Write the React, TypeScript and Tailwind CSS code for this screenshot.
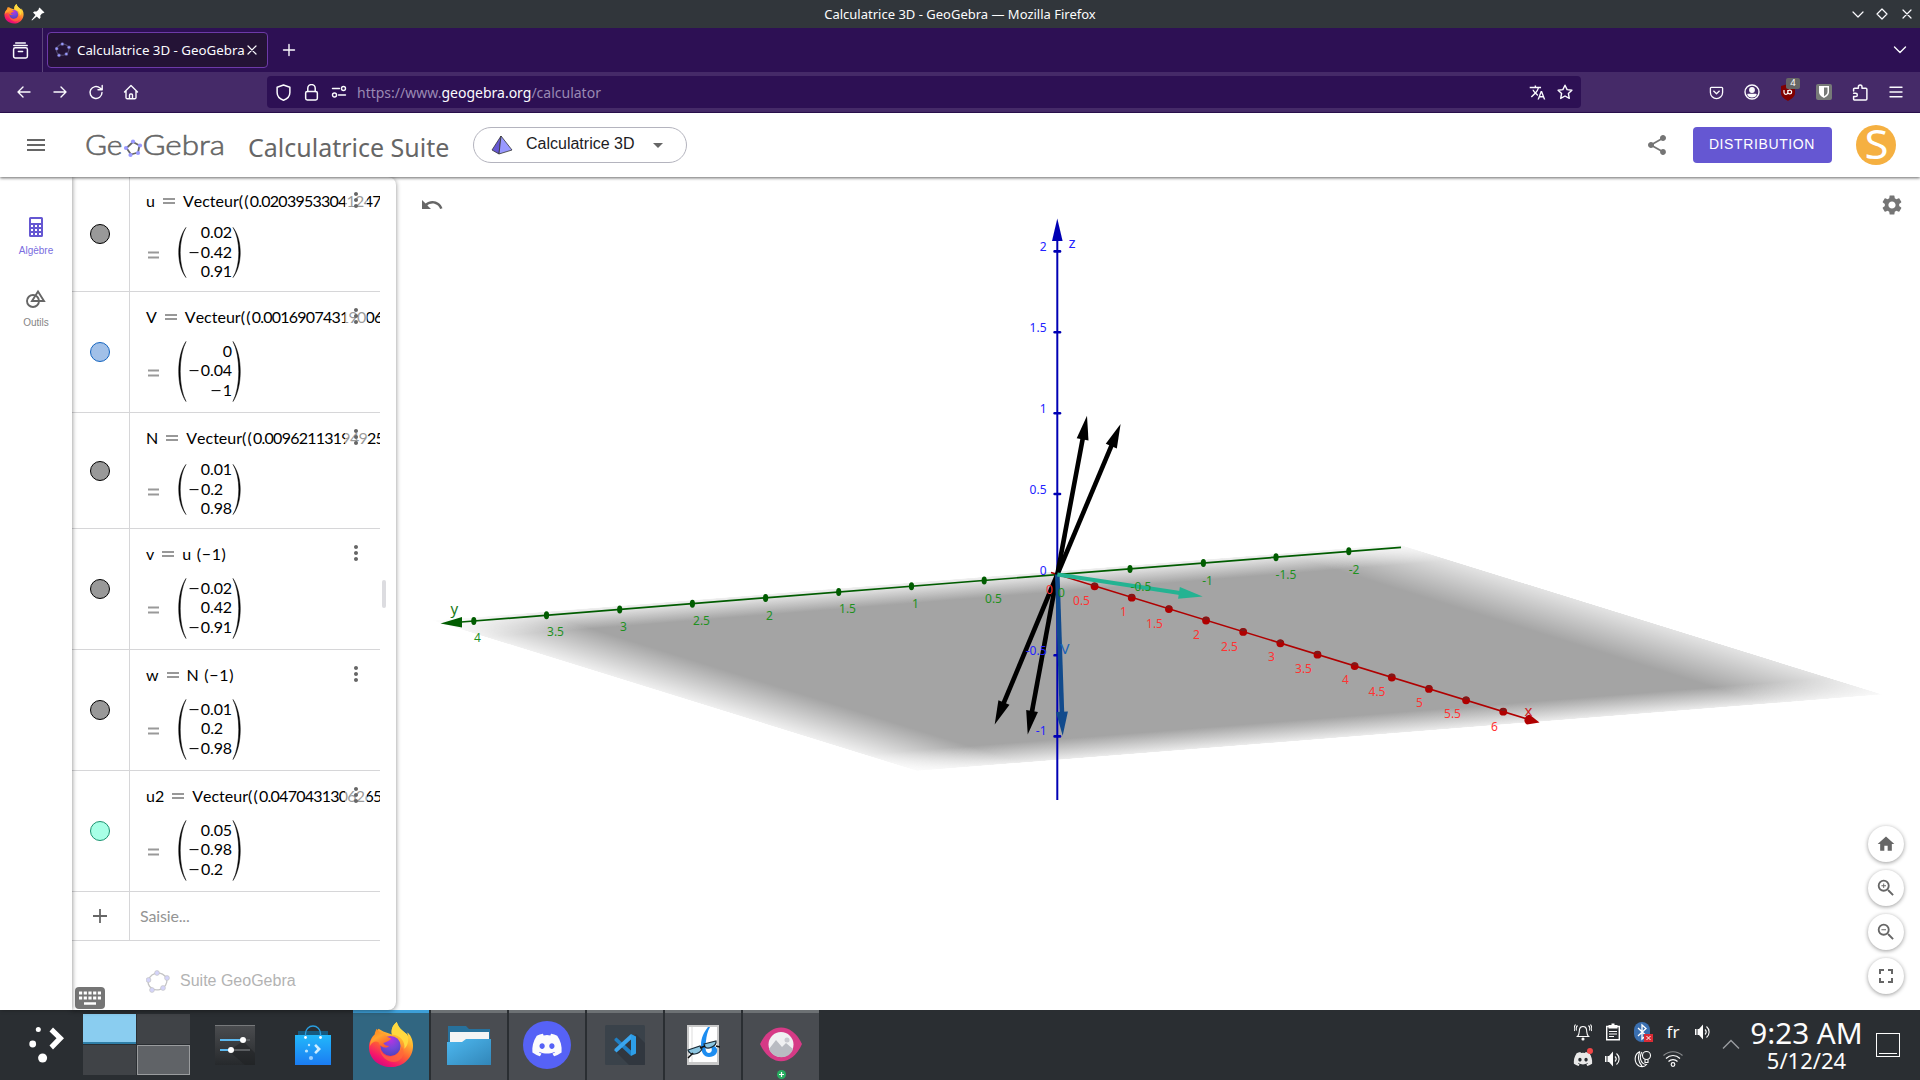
import React from "react";
import { MdShare, MdSettings, MdHome, MdFullscreen, MdArrowDropDown, MdMoreVert, MdZoomIn, MdZoomOut, MdUndo, MdTranslate, MdMenu } from "react-icons/md";
import { FaDiscord } from "react-icons/fa";

const SANS = "font-['Noto_Sans',sans-serif]";
const ARIAL = "font-['Liberation_Sans',Arial,sans-serif]";
const MATH = "font-['Lato',sans-serif]";

function Firefox({ size }: { size: number }) {
  return (
    <svg width={size} height={size} viewBox="0 0 48 48" className="shrink-0">
      <defs>
        <linearGradient id="ffBody" x1="0.8" y1="0.05" x2="0.3" y2="1">
          <stop offset="0" stopColor="#fff14f" />
          <stop offset="0.3" stopColor="#ffb82e" />
          <stop offset="0.6" stopColor="#ff5d36" />
          <stop offset="0.85" stopColor="#f5156c" />
          <stop offset="1" stopColor="#d10a80" />
        </linearGradient>
        <radialGradient id="ffGlobe" cx="0.5" cy="0.2" r="0.9">
          <stop offset="0" stopColor="#b833e1" />
          <stop offset="0.5" stopColor="#7048d8" />
          <stop offset="1" stopColor="#4a3fb5" />
        </radialGradient>
        <linearGradient id="ffFox" x1="0" y1="0" x2="0.6" y2="1">
          <stop offset="0" stopColor="#ff7a1a" />
          <stop offset="0.5" stopColor="#ffa32e" />
          <stop offset="1" stopColor="#ff5a30" />
        </linearGradient>
      </defs>
      <path d="M30 0c-5 4-6 9-5 13l-9-3-5-3c-1 1-2 3-2 5C4 14 1 21 1 26c0 12 10 21 23 21s23-10 23-22c0-7-3-12-6-14 0 1 1 3 1 4C39 10 32 8 30 0z" fill="url(#ffBody)" />
      <path d="M30 0c-5 4-6 9-5 13 9 1 14 7 13 15 4-4 5-10 3-15C38 10 32 8 30 0z" fill="#ffd93f" />
      <circle cx="23.500" cy="25" r="10.500" fill="url(#ffGlobe)" />
      <path d="M9 7c-1 2-2 4-2 6-3 3-5 7-5 12 3-5 6-5 9-4 2 6 8 7 11 4-3 0-5-1-6-3 3-1 7-2 8-5-3-1-5-1-7-5-3 0-5-1-8-5z" fill="url(#ffFox)" />
      <path d="M12 26c1 8 9 12 16 9 5-2 7-6 7-10 4 6 2 13-4 16-8 3-18-3-19-15z" fill="#ff6a3a" opacity="0.700" />
    </svg>
  );
}

function Pentagon({ size, line, dot, width }: { size: number; line: string; dot: string; width: number }) {
  const pts = [[11, 3], [21, 8], [17, 18], [6, 20], [2.5, 10]];
  return (
    <svg width={size} height={size} viewBox="0 0 24 24">
      <ellipse cx="11.500" cy="11.500" rx="9.500" ry="8.300" fill="none" stroke={line} strokeWidth={width} transform="rotate(-15 11.5 11.5)" />
      {pts.map(([x, y]) => <circle key={x} cx={x} cy={y} r="2.400" fill={dot} stroke={line} strokeWidth="0.700" />)}
    </svg>
  );
}

const stroke = { fill: "none", stroke: "#fbfbfe", strokeWidth: 1.4, strokeLinecap: "round" as const, strokeLinejoin: "round" as const };
function Ic({ children, size = 16, box = "w-9", vb = 16 }: { children: React.ReactNode; size?: number; box?: string; vb?: number }) {
  return (
    <div className={`flex shrink-0 items-center justify-center ${box}`}>
      <svg width={size} height={size} viewBox={`0 0 ${vb} ${vb}`} {...stroke}>{children}</svg>
    </div>
  );
}

function TitleBar() {
  return (
    <div className={`flex h-7 items-center bg-[#31363b] text-[13px] text-[#fcfcfc] ${SANS}`}>
      <div className="flex w-[100px] items-center gap-[7px] pl-1">
        <Firefox size={20} />
        <svg width="14" height="14" viewBox="0 0 14 14"><path d="M8.500 0.500l5 5-1.500.8-1 .2-1.700 2 .2 2.200-1.200 1.200L5.800 9.400 1 13.500.5 13l4-4.900L2 5.600l1.300-1.200 2.200.2 2-1.800.2-1z" fill="#fff" /></svg>
      </div>
      <div className="flex-1 pt-[2px] text-center">Calculatrice 3D - GeoGebra — Mozilla Firefox</div>
      <div className="flex w-[100px] justify-end">
        <Ic size={12} vb={12} box="w-6"><path d="M1 4l5 5 5-5" strokeWidth="1.200" /></Ic>
        <Ic size={12} vb={12} box="w-6"><path d="M6 1l5 5-5 5-5-5z" strokeWidth="1.200" /></Ic>
        <Ic size={12} vb={12} box="w-[26px]"><path d="M2 2l8 8M10 2l-8 8" strokeWidth="1.200" /></Ic>
      </div>
    </div>
  );
}

function TabBar() {
  return (
    <div className={`flex h-11 items-center bg-[#2d1054] text-[#fbfbfe] ${SANS}`}>
      <Ic size={17} box="w-10"><rect x="1.500" y="5.500" width="13" height="9.500" rx="1.500" /><path d="M1.700 3.300h12.600M3.500 1h9M6 9h4" /></Ic>
      <div className="ml-[2px] h-full w-px bg-[#5b4478]" />
      <div className="ml-1 flex h-9 w-[221px] items-center rounded border border-[#6d3aa8] bg-[#241336] pl-[7px]">
        <Pentagon size={16} line="#4b4468" dot="#9999ff" width={1.8} />
        <span className="ml-[6px] w-[168px] pt-[2px] text-[13.300px] whitespace-nowrap">Calculatrice 3D - GeoGebra</span>
        <Ic size={12} vb={12} box="w-3.5"><path d="M2 2l8 8M10 2l-8 8" strokeWidth="1.200" /></Ic>
      </div>
      <Ic size={16} box="ml-[3px] w-9"><path d="M8 2.500v11M2.500 8h11" /></Ic>
      <div className="flex-1" />
      <Ic size={14} vb={14} box="w-10"><path d="M1.500 4l5.500 5.500L12.500 4" /></Ic>
    </div>
  );
}

function NavBar() {
  return (
    <div className={`flex h-[41px] items-center border-b border-[#2d1054] bg-[#452a68] pl-1.5 ${SANS}`}>
      <Ic><path d="M14 8H2M7 3L2 8l5 5" /></Ic>
      <Ic><path d="M2 8h12M9 3l5 5-5 5" /></Ic>
      <Ic><path d="M14 8.500A6 6 0 1 1 12 4l1.800 1.600M14.200 1.500v4.300H10" /></Ic>
      <Ic box="-ml-px w-9"><path d="M1.500 8L8 1.500 14.500 8M3 7v6.500a1.200 1.200 0 0 0 1.200 1.200h7.600A1.200 1.200 0 0 0 13 13.500V7M6.500 14.500V11a1 1 0 0 1 1-1h1a1 1 0 0 1 1 1v3.500" /></Ic>
      <div className="ml-[118px] flex h-8 w-[1314px] items-center rounded bg-[#2d1054] pl-[2px]">
        <Ic size={17} box="w-7"><path d="M8 1l6 2v5c0 3.500-2.500 6-6 7.300C4.500 14 2 11.500 2 8V3z" /></Ic>
        <Ic size={17} box="w-7"><rect x="2.500" y="7" width="11" height="8" rx="1.500" /><path d="M4.500 7V4a3.500 3.500 0 0 1 7 0v3" /></Ic>
        <Ic box="w-7"><circle cx="12.500" cy="4.500" r="2" /><circle cx="3.500" cy="11" r="2" /><path d="M1.500 4.500h7M7.500 11h7" /></Ic>
        <span className="ml-1 text-[14px] text-[#9a89b3]">https://www.<span className="text-[#fbfbfe]">geogebra.org</span>/calculator</span>
        <div className="flex-1" />
        <div className="flex w-7 justify-center"><MdTranslate size={17} color="#fbfbfe" /></div>
        <Ic size={16} box="w-7"><path d="M8 1.200l2.100 4.400 4.800.6-3.500 3.300.9 4.900L8 12l-4.300 2.400.9-4.900L1.100 6.200l4.800-.6z" /></Ic>
        <div className="w-[2px]" />
      </div>
      <div className="flex-1" />
      <Ic size={15} box="w-9"><path d="M2.500 2.500h11a1 1 0 0 1 1 1V8a6.500 6.500 0 0 1-13 0V3.500a1 1 0 0 1 1-1zM5 6.500l3 2.800 3-2.800" /></Ic>
      <Ic size={16} box="w-9"><circle cx="8" cy="8" r="7" /><circle cx="8" cy="6" r="2.200" fill="#fbfbfe" /><path d="M4 10.500h8c-1 3-7 3-8 0z" fill="#fbfbfe" /></Ic>
      <div className="relative flex w-9 justify-center">
        <svg width="16" height="17" viewBox="0 0 16 17"><path d="M1 2l7-2 7 2v7c0 4-4 6-7 8-3-2-7-4-7-8z" fill="#800000" /><path d="M4 6v2.500a1.700 1.700 0 0 0 3.800 0V6M7.800 8a1.900 1.900 0 1 0 3.800 0 1.900 1.900 0 1 0-3.800 0" fill="none" stroke="#fff" strokeWidth="1.200" /></svg>
        <span className="absolute -top-[6px] left-[16px] flex h-[11px] w-[14px] items-center justify-center rounded-[2px] bg-[#666] text-[9.500px] text-white">4</span>
      </div>
      <div className="flex w-9 justify-center"><svg width="16" height="16" viewBox="0 0 16 16"><rect width="16" height="16" rx="2" fill="#777a78" /><path d="M3 2h10v6c0 3-3 5-5 6-2-1-5-3-5-6z" fill="#fff" /><path d="M8 3.500h3.500V8c0 2-2 3.500-3.500 4.300z" fill="#777a78" /></svg></div>
      <Ic size={17} box="w-9"><path d="M1.500 6.500V5a1 1 0 0 1 1-1H6V2.700a1.700 1.700 0 0 1 3.400 0V4H13a1 1 0 0 1 1 1v9a1 1 0 0 1-1 1H2.500a1 1 0 0 1-1-1v-2.200h2a1.500 1.500 0 0 0 0-3h-2" /></Ic>
      <Ic size={14} vb={14} box="w-9"><path d="M1 2.200h12M1 7h12M1 11.800h12" /></Ic>
      <div className="w-1.5" />
    </div>
  );
}

function AppHeader() {
  return (
    <header className="relative z-20 flex h-16 items-center bg-white shadow-[0_1px_3px_rgba(0,0,0,0.6)]">
      <MdMenu size={24} color="#666" className="ml-6" />
      <svg width="150" height="40" viewBox="0 0 150 40" className="ml-[35px]">
        <g fill="#666" fontFamily="Lato, sans-serif" fontSize="28" fontWeight="300" stroke="#666" strokeWidth="0.600">
          <text x="2" y="29.500" textLength="37.500" lengthAdjust="spacingAndGlyphs">Ge</text>
          <text x="59.500" y="29.500" textLength="82.500" lengthAdjust="spacingAndGlyphs">Gebra</text>
        </g>
        <path d="M50 17l6.500 3.500-1.500 7-7 2-4.500-6.500z" fill="none" stroke="#666" strokeWidth="1.800" strokeLinejoin="round" />
        {[[50, 16.5], [57, 20.5], [55, 28], [47.5, 30], [43, 23]].map(([x, y]) => <circle key={x} cx={x} cy={y} r="2.100" fill="#9999ff" />)}
      </svg>
      <div className={`ml-[15px] w-[204px] pt-1 text-[25px] leading-8 whitespace-nowrap text-[#666] ${SANS}`}>Calculatrice Suite</div>
      <button className={`ml-[21px] flex h-9 w-[214px] items-center rounded-full border border-[#b4b4be] text-[16px] text-[#1c1c1f] ${ARIAL}`}>
        <svg width="22" height="20" viewBox="0 0 22 20" className="ml-[17px]"><path d="M10 1L1 15l7 4z" fill="#6557d2" stroke="#333" strokeWidth="0.800" /><path d="M10 1l11 14-13 4z" fill="#9999ff" stroke="#333" strokeWidth="0.800" /></svg>
        <span className="ml-[13px] pb-[2px]">Calculatrice 3D</span>
        <MdArrowDropDown size={24} color="#666" className="ml-3" />
      </button>
      <div className="flex-1" />
      <MdShare size={24} color="#757575" />
      <button className={`ml-6 flex h-9 w-[139px] items-center justify-center rounded bg-[#6557d2] pr-px pb-[2px] text-[14px] tracking-[0.620px] text-white ${ARIAL}`}>DISTRIBUTION</button>
      <svg width="40" height="40" viewBox="0 0 40 40" className="mr-6 ml-6"><circle cx="20" cy="20" r="20" fill="#f5b041" /><text x="8.500" y="33.800" fontFamily="'Noto Sans', sans-serif" fontSize="40" textLength="24" lengthAdjust="spacingAndGlyphs" fill="#fff">S</text></svg>
    </header>
  );
}

type Item = { name: string; def: string; wide: boolean; fill: string; border: string; rows: string[]; tall: boolean };
const items: Item[] = [
  { name: "u", def: "0.020395330412472", wide: true, fill: "bg-[#999]", border: "border-black", rows: ["0.02", "−0.42", "0.91"], tall: false },
  { name: "V", def: "0.001690743190063", wide: true, fill: "bg-[#a1c0e8]", border: "border-[#1565c0]", rows: ["0", "−0.04", "−1"], tall: true },
  { name: "N", def: "0.009621131949253", wide: true, fill: "bg-[#999]", border: "border-black", rows: ["0.01", "−0.2", "0.98"], tall: false },
  { name: "v", def: "u (−1)", wide: false, fill: "bg-[#999]", border: "border-black", rows: ["−0.02", "0.42", "−0.91"], tall: true },
  { name: "w", def: "N (−1)", wide: false, fill: "bg-[#999]", border: "border-black", rows: ["−0.01", "0.2", "−0.98"], tall: true },
  { name: "u2", def: "0.04704313062653", wide: true, fill: "bg-[#a8ffe6]", border: "border-[#1b9370]", rows: ["0.05", "−0.98", "−0.2"], tall: true },
];

function Paren({ h, flip }: { h: number; flip?: boolean }) {
  return (
    <svg width="10" height={h} viewBox="0 0 10 60" preserveAspectRatio="none" className={flip ? "-scale-x-100" : ""}>
      <path d="M9 0.500C-0.700 15-0.700 45 9 59.500C1.300 45 1.300 15 9 0.500z" fill="#000" stroke="#000" strokeWidth="0.500" />
    </svg>
  );
}

function Num({ value }: { value: string }) {
  const neg = value.startsWith("−");
  return (
    <span className={`flex h-[19.500px] leading-[19.500px] ${value.endsWith("0.2") ? "pr-[9px]" : ""}`}>
      {neg && <span className="mr-[2px] w-[11px] origin-left scale-x-[1.300]">−</span>}
      <span className="tracking-[-0.100px]">{neg ? value.slice(1) : value}</span>
    </span>
  );
}

function AlgebraRow({ it }: { it: Item }) {
  return (
    <div className={`flex w-[308px] border-b border-[#d6d6d8] ${it.tall ? "h-[121px]" : "h-[116px]"}`}>
      <div className="flex w-[58px] items-center justify-center border-r border-[#d6d6d8] pr-px">
        <div className={`size-5 rounded-full border-[1.500px] ${it.fill} ${it.border}`} />
      </div>
      <div className={`relative flex-1 overflow-hidden pl-4 text-[16px] text-black ${MATH}`}>
        <div className="flex h-[50px] items-center whitespace-nowrap">
          <span>{it.name}</span>
          <svg width="12" height="6" viewBox="0 0 12 6" className="mx-[8px] shrink-0"><path d="M0 1h12M0 5h12" stroke="#777" strokeWidth="1.300" /></svg>
          {it.wide
            ? <span><span className="[font-kerning:none]">Vecteur</span><span className="tracking-[1.200px]">((</span><span className="tracking-[-0.750px]">{it.def}</span></span>
            : <span className="tracking-[0.700px]">{it.def}</span>}
        </div>
        <div className="absolute top-[10px] right-[13px] flex h-7 w-[22px] items-center justify-center bg-white/60"><MdMoreVert size={24} color="#666" className="shrink-0" /></div>
        <div className={`flex items-center ${it.tall ? "h-[58px]" : "h-[53px]"}`}>
          <svg width="11" height="8" viewBox="0 0 11 8" className="mt-[4px] ml-[2px]"><path d="M0 1.500h11M0 6.500h11" stroke="#999" strokeWidth="2.200" /></svg>
          <div className="ml-[18px] flex items-center">
            <Paren h={it.tall ? 61 : 51} />
            <div className="flex w-[45px] flex-col items-end pb-[2px]">
              {it.rows.map((r, i) => <Num key={i} value={r} />)}
            </div>
            <Paren h={it.tall ? 61 : 51} flip />
          </div>
        </div>
      </div>
    </div>
  );
}

function AlgebraView() {
  return (
    <section className="relative z-[5] flex w-[324px] rounded-r-lg bg-white shadow-[0_1px_5px_rgba(0,0,0,0.45)]">
      <div className="h-[833px] w-[308px] overflow-hidden">
        <div className="-mt-px">
          {items.map((it) => <AlgebraRow key={it.name} it={it} />)}
          <div className="flex h-[49px] border-b border-[#d6d6d8]">
            <div className="flex w-[58px] items-center justify-center border-r border-[#d6d6d8] pr-px">
              <svg width="14" height="14" viewBox="0 0 14 14"><path d="M7 0v14M0 7h14" stroke="#666" strokeWidth="1.800" /></svg>
            </div>
            <div className={`flex items-center pb-px pl-2.5 text-[16px] tracking-[-0.150px] text-[#949494] ${MATH}`}>Saisie...</div>
          </div>
          <div className={`mt-[27px] flex h-7 items-center pl-[74px] text-[16px] text-[#b3b3b3] ${ARIAL}`}>
            <Pentagon size={24} line="#c4c4c4" dot="#d4d4fa" width={1.3} />
            <span className="ml-[10px] pb-[2px]">Suite GeoGebra</span>
          </div>
        </div>
      </div>
      <div className="mt-[403px] ml-[2px] h-7 w-1 rounded-full bg-[#dcdce0]" />
      <div className="absolute bottom-[1px] left-[3px] flex h-[22px] w-[30px] items-center justify-center rounded bg-[#757575]">
        <svg width="22" height="15" viewBox="0 0 22 15"><path d="M0 2h22M0 7h22" stroke="#fff" strokeWidth="3" strokeDasharray="3.200 1.500" /><path d="M5 12.500h12" stroke="#fff" strokeWidth="2.500" /></svg>
      </div>
    </section>
  );
}

function Arrow({ x, y, color, w = 4.6, hw = 6, len = 24 }: { x: number; y: number; color: string; w?: number; hw?: number; len?: number }) {
  const ox = 1057.300, oy = 574.500;
  const d = Math.hypot(x - ox, y - oy);
  const ux = (x - ox) / d, uy = (y - oy) / d;
  const bx = x - ux * len, by = y - uy * len;
  return (
    <g fill={color} stroke={color}>
      <line x1={ox} y1={oy} x2={bx + ux} y2={by + uy} strokeWidth={w} />
      <path d={`M${x} ${y}L${bx - uy * hw} ${by + ux * hw}L${bx + uy * hw} ${by - ux * hw}z`} stroke="none" />
    </g>
  );
}

type P = [string, number, number];
const zLabels: P[] = [["2", 1046.5, 247], ["1.5", 1046.5, 328], ["1", 1046.5, 409], ["0.5", 1046.5, 490], ["0", 1046.5, 571], ["-0.5", 1046.5, 651], ["-1", 1046.5, 731]];
const yLabels: P[] = [["4", 477.5, 638], ["3.5", 555.5, 632], ["3", 623.5, 627], ["2.5", 701.5, 621], ["2", 769.5, 615.5], ["1.5", 847.5, 609], ["1", 915.5, 603.5], ["0.5", 993.5, 599], ["0", 1061.5, 593], ["-0.5", 1141, 587], ["-1", 1207.5, 581], ["-1.5", 1286, 575], ["-2", 1354, 570]];
const xLabels: P[] = [["0", 1049.5, 590], ["0.5", 1081.5, 601], ["1", 1123.5, 612], ["1.5", 1154.5, 623.5], ["2", 1196.5, 634.5], ["2.5", 1229.5, 646.5], ["3", 1271.5, 657], ["3.5", 1303.5, 669], ["4", 1345.5, 680], ["4.5", 1377, 691.5], ["5", 1419.5, 703], ["5.5", 1452.5, 714], ["6", 1494.5, 726.5]];
const yTicks = [[473.8, 621], [546.5, 615.3], [619.7, 609.4], [692.4, 603.7], [765.6, 597.9], [838.7, 592.1], [911.5, 586.3], [984.2, 580.5], [1130, 569], [1203.4, 563.1], [1276, 557.2], [1348.8, 551.3]];

function Scene() {
  return (
    <svg width="1524" height="833" viewBox="396 177 1524 833" className="block" fontFamily="'Noto Sans', sans-serif" fontSize="12">
      <defs>
        <linearGradient id="fadeU"><stop offset="0" stopColor="#fff" stopOpacity="0.160" /><stop offset="0.110" stopColor="#fff" /><stop offset="0.880" stopColor="#fff" /><stop offset="1" stopColor="#fff" stopOpacity="0.300" /></linearGradient>
        <linearGradient id="fadeV" x1="0" y1="0" x2="0" y2="1"><stop offset="0" stopColor="#a4a4a4" stopOpacity="0.150" /><stop offset="0.110" stopColor="#a4a4a4" /><stop offset="0.890" stopColor="#a4a4a4" /><stop offset="1" stopColor="#a4a4a4" stopOpacity="0.200" /></linearGradient>
        <mask id="fadeMask" maskUnits="userSpaceOnUse" x="0" y="0" width="100" height="100" style={{ maskType: "alpha" }}><rect width="100" height="100" fill="url(#fadeU)" /></mask>
      </defs>
      <g transform="matrix(9.660 -0.765 4.850 1.506 432 620.500)"><rect width="100" height="100" fill="url(#fadeV)" mask="url(#fadeMask)" /></g>

      <line x1="455" y1="622.500" x2="1401" y2="547.300" stroke="#005c00" strokeWidth="1.700" />
      <path d="M440.500 623.500L462 617v10.500z" fill="#005c00" />
      {yTicks.map(([x, y]) => <ellipse key={x} cx={x} cy={y} rx="2.600" ry="4" fill="#005c00" />)}

      <line x1="1051" y1="572.500" x2="1532" y2="720.500" stroke="#b00000" strokeWidth="1.500" />
      {Array.from({ length: 12 }, (_, i) => {
        const x = 1094.6 + i * 37.15, y = 586.3 + i * 11.4;
        return <g key={i}><circle cx={x} cy={y} r="3.900" fill="#b00000" /><path d={`M${x - 3.5} ${y - 1.5}a3.900 3.900 0 0 1 7 0l-3.500 1z`} fill="#7d1a1a" /></g>;
      })}
      <path d="M1539.500 722.500l-9.500-7.500c-5-1-8 7-3 9.500z" fill="#b00000" />

      <line x1="1057.300" y1="238" x2="1057.300" y2="800" stroke="#0000b4" strokeWidth="2" />
      <path d="M1057.300 218.500l-5.300 22.500h10.600z" fill="#0000b4" />
      {[251.4, 332.2, 413.2, 494, 655.3, 736.4].map((y) => <rect key={y} x="1053.300" y={y - 1.3} width="8" height="2.600" rx="1.200" fill="#0000b4" />)}

      <Arrow x={1087} y={415.700} color="#000" />
      <Arrow x={1120.600} y={424} color="#000" />
      <Arrow x={994.700} y={724.600} color="#000" />
      <Arrow x={1027.700} y={734.600} color="#000" />
      <Arrow x={1062.700} y={735.700} color="#114a8c" />
      <Arrow x={1202.700} y={596.400} color="#24b392" w={4.200} />

      <g fill="#2222ff" textAnchor="end">{zLabels.map(([t, x, y]) => <text key={t} x={x} y={y + 4.2}>{t}</text>)}</g>
      <g fill="#1f911f" textAnchor="middle">{yLabels.map(([t, x, y]) => <text key={t} x={x} y={y + 4.2}>{t}</text>)}</g>
      <g fill="#ff3333" textAnchor="middle">{xLabels.map(([t, x, y]) => <text key={t} x={x} y={y + 4.2}>{t}</text>)}</g>
      <text x="1068.500" y="248" fill="#2222ff" fontSize="15">z</text>
      <text x="450.500" y="614" fill="#1a7a1a" fontSize="15">y</text>
      <text x="1524.500" y="716" fill="#cc2222" fontSize="15">x</text>
      <text x="1060.500" y="654" fill="#1a63b8" fontSize="15">V</text>
    </svg>
  );
}

function Round({ children }: { children: React.ReactNode }) {
  return <div className="flex size-9 items-center justify-center rounded-full bg-white text-[#666] shadow-[0_1px_4px_rgba(0,0,0,0.4)]">{children}</div>;
}

function Workspace() {
  return (
    <main className="flex h-[833px] bg-white">
      <nav className={`relative z-10 flex w-[72px] flex-col items-center bg-white text-[10px] leading-4 shadow-[1px_0_4px_rgba(0,0,0,0.35)] ${ARIAL}`}>
        <svg width="14" height="20" viewBox="0 0 14 20" className="mt-10"><path fillRule="evenodd" d="M1.500 0h11A1.500 1.500 0 0 1 14 1.500v17a1.500 1.500 0 0 1-1.500 1.500h-11A1.500 1.500 0 0 1 0 18.500v-17A1.500 1.500 0 0 1 1.500 0zM2 2v4h10V2zM2 8v2h2V8zm4 0v2h2V8zm4 0v2h2V8zM2 12v2h2v-2zm4 0v2h2v-2zm4 0v2h2v-2zM2 16v2h2v-2zm4 0v2h2v-2zm4 0v2h2v-2z" fill="#6557d2" /></svg>
        <span className="mt-[6px] text-[#7a6de0]">Algèbre</span>
        <svg width="20" height="20" viewBox="0 0 20 20" className="mt-[30px]"><circle cx="7" cy="12" r="6" fill="none" stroke="#666" strokeWidth="1.900" /><path d="M12 2.500L18 12H6z" fill="none" stroke="#666" strokeWidth="1.900" /></svg>
        <span className="mt-[6px] text-[#858585]">Outils</span>
      </nav>
      <AlgebraView />
      <section className="relative w-[1524px]">
        <Scene />
        <MdUndo size={24} color="#666" className="absolute top-4 left-6" />
        <MdSettings size={24} color="#757575" className="absolute top-4 right-4" />
        <div className="absolute top-[649px] right-4 flex flex-col gap-2">
          <Round><MdHome size={20} /></Round>
          <Round><MdZoomIn size={22} /></Round>
          <Round><MdZoomOut size={22} /></Round>
          <Round><MdFullscreen size={24} /></Round>
        </div>
      </section>
    </main>
  );
}

function Task({ children, active }: { children: React.ReactNode; active?: boolean }) {
  return (
    <div className={`relative flex h-[70px] w-[76px] items-center justify-center border-t-[3px] pb-[3px] ${active ? "border-[#3d9fd8] bg-[#316681]" : "border-[#6d7174] bg-[#494c51]"}`}>{children}</div>
  );
}

function Volume() {
  return <svg width="18" height="18" viewBox="0 0 18 18"><path d="M1 6h1.500v6H1zM3.500 6H5l4-4.500v15L5 12H3.500z" fill="#fcfcfc" /><path d="M11 6.500c1.500 1.500 1.500 3.500 0 5M12.500 3.500c3.500 3 3.500 8 0 11" fill="none" stroke="#fcfcfc" strokeWidth="1.100" /></svg>;
}

function Taskbar() {
  return (
    <footer className={`flex h-[70px] bg-[#2a2e32] text-[#fcfcfc] ${SANS}`}>
      <svg width="83" height="70" viewBox="0 0 83 70" fill="#fff"><circle cx="38.300" cy="19.500" r="2.500" /><circle cx="32.700" cy="34" r="3.400" /><circle cx="42.600" cy="48" r="4.500" /><path d="M49.500 21.500l3.500-4L64 28.200 53 39.500l-3.500-4 7-7.200z" /></svg>
      <div className="grid h-[61px] w-[107px] grid-cols-2 gap-px pt-1 *:h-[30px]">
        <div className="border-b-2 border-[#2f7fa8] bg-[#8acdf0]" />
        <div className="bg-[#404347]" />
        <div className="bg-[#404347]" />
        <div className="border border-[#9a9c9e] bg-[#606367]" />
      </div>
      <div className="ml-[25px] flex w-10 items-center pb-px">
        <svg width="40" height="40" viewBox="0 0 40 40"><defs><linearGradient id="setBg" x1="0" y1="0" x2="0" y2="1"><stop offset="0" stopColor="#4b4d50" /><stop offset="1" stopColor="#26292c" /></linearGradient></defs><rect width="40" height="40" fill="url(#setBg)" /><path d="M0 0.500h40" stroke="#77797b" /><path d="M28 16l12 12v12H30L14 26z" fill="#1d2022" opacity="0.500" /><path d="M5 15h30M5 25h30" stroke="#5a5d60" strokeWidth="2" /><path d="M5 15h22M5 25h11" stroke="#5cb8ee" strokeWidth="2" /><circle cx="28" cy="15" r="3" fill="#fff" /><circle cx="16" cy="25" r="3" fill="#fff" /></svg>
      </div>
      <div className="ml-10 flex w-9 items-center pb-px">
        <svg width="36" height="40" viewBox="0 0 36 40"><defs><linearGradient id="bag" x1="0" y1="0" x2="0" y2="1"><stop offset="0" stopColor="#22b8fb" /><stop offset="1" stopColor="#1b7cf2" /></linearGradient></defs><path d="M3 6h30v5H3z" fill="#155a80" /><rect y="10" width="36" height="30" fill="url(#bag)" /><path d="M10.500 12V8.500a7.500 7.500 0 0 1 15 0V12" fill="none" stroke="#2a9fe0" strokeWidth="1.300" /><circle cx="10.500" cy="12.500" r="1.400" fill="#fff" /><circle cx="25.500" cy="12.500" r="1.400" fill="#fff" /><path d="M21 19l5 5-5 5-1.800-1.800 3-3.200-3-3.200z" fill="#cfeeff" /><circle cx="14" cy="20" r="1.200" fill="#b8e4ff" /><circle cx="11.500" cy="26" r="1.600" fill="#b8e4ff" /><circle cx="16" cy="33" r="2.100" fill="#9ad0ff" /></svg>
      </div>
      <div className="ml-[22px] flex gap-[2px]">
        <Task active><Firefox size={46} /></Task>
        <Task>
          <svg width="44" height="40" viewBox="0 0 44 40"><defs><linearGradient id="fold" x1="0" y1="0" x2="1" y2="1"><stop offset="0" stopColor="#4db8f0" /><stop offset="1" stopColor="#3286b8" /></linearGradient></defs><path d="M1 1h18l3 3h21v14H1z" fill="#27719c" /><path d="M3 7h39v12H3z" fill="#f4f4f4" /><path d="M0 17h15l4-3h25v26H0z" fill="url(#fold)" /></svg>
        </Task>
        <Task><div className="flex size-12 items-center justify-center rounded-full bg-[#5662f6]"><FaDiscord size={32} /></div></Task>
        <Task>
          <svg width="40" height="40" viewBox="0 0 40 40"><rect width="40" height="40" rx="1.500" fill="#3a424a" /><path d="M31 9l9 9v22H24L10 26z" fill="#2b3138" opacity="0.600" /><path d="M26 9l5 2.500v17L26 31z" fill="#2d9ee8" /><path d="M9.500 14l2-1.500L26 25.500V31L9.500 15.500z" fill="#1f7fc4" /><path d="M9.500 25.500l2 2L26 14.500V9L9.500 24z" fill="#3aa5ee" /></svg>
        </Task>
        <Task>
          <svg width="34" height="40" viewBox="0 0 34 40"><rect x="1" width="32" height="40" fill="#c9c9c9" /><rect x="3" y="2" width="28" height="35" fill="#fff" /><path d="M6 2v35" stroke="#ddd" /><path d="M22 2c-4 5-7 11-7 18 0 8 3 12 8 12 6 0 9-4 8-8-1-3-4-4-7-3 3 3 2 7-1 7-4 0-4-6-3-12 .5-5 1.500-10 4-14z" fill="#1d8df0" /><path d="M2 25l12-4 2 3c-3 6-12 7-14 1zM18 19l12-3c1 5-8 9-11 6z" fill="#6fb8da" fillOpacity="0.800" stroke="#1a2c38" strokeWidth="1.200" /><path d="M2 33l5-5M14 23l5-2M30 21l4 1" stroke="#111" strokeWidth="1.500" /></svg>
        </Task>
        <Task>
          <svg width="42" height="36" viewBox="0 0 42 36"><path d="M0 17C10-5 32-5 42 17 32 40 10 40 0 17z" fill="#d63a86" /><circle cx="21" cy="17.500" r="12.500" fill="#f0f0f2" /><path d="M9 22l7-9 6 7 4-4 7 6c-3 11-20 11-24 0z" fill="#b9bbc2" /><circle cx="27" cy="13" r="2.500" fill="#c9cad0" /></svg>
          <div className="absolute bottom-[1px] flex size-[9px] items-center justify-center rounded-full bg-[#27ae60]"><svg width="7" height="7" viewBox="0 0 7 7"><path d="M3.500 1v5M1 3.500h5" stroke="#fff" strokeWidth="1.200" /></svg></div>
        </Task>
      </div>
      <div className="flex-1" />
      <div className="mt-2 grid h-[54px] w-[150px] grid-cols-5 grid-rows-2 place-items-center">
        <svg width="18" height="18" viewBox="0 0 18 18" fill="none" stroke="#fcfcfc" strokeWidth="1.100"><path d="M3.500 13.500c2-1.500 1.500-4 2-7 .5-4 6.500-4 7 0 .5 3 0 5.500 2 7zM3.500 2.500C2 4 2 6 2.500 7.500M1.500 1.500C0 3.500 0 6 .5 8M14.500 2.500C16 4 16 6 15.500 7.500M16.500 1.500C18 3.500 18 6 17.500 8" /><circle cx="9" cy="16" r="1" fill="#fff" /></svg>
        <svg width="16" height="18" viewBox="0 0 16 18"><path d="M1.700 3.500h12.600v13.300H1.700z" fill="none" stroke="#fcfcfc" strokeWidth="1.400" /><path d="M3.500 2h3V0.500h3V2h3v3.500h-9z" fill="#fcfcfc" /><path d="M4 8.500h8M4 11h8M4 13.500h5" stroke="#fcfcfc" strokeWidth="1.200" /></svg>
        <svg width="20" height="22" viewBox="0 0 20 22"><rect x="1" y="1" width="16" height="20" rx="8" fill="#3a6fb0" /><path d="M5 7l8 7.500-4 3.500V4l4 3.500L5 15" fill="none" stroke="#fff" strokeWidth="1.300" /><rect x="11" y="13" width="9" height="8" fill="#da2c35" /><path d="M13.500 15l4 4M17.500 15l-4 4" stroke="#fff" /></svg>
        <span className="text-[17px] leading-none">fr</span>
        <Volume />
        <div className="relative"><FaDiscord size={20} color="#e8e8e8" /><div className="absolute -top-[1px] right-0 size-[6px] rounded-full bg-[#f04747]" /></div>
        <Volume />
        <svg width="18" height="18" viewBox="0 0 18 18" fill="none" stroke="#fcfcfc" strokeWidth="1.100"><path d="M6 1.500c-6 2.500-6.500 11-1 14.500 3 1 6 .5 7.500-1.500C6 14 5 6 8 2M6 1.500C3.500 6 4 12 8 16" /><circle cx="12.500" cy="5.500" r="4" /><path d="M11 9.500v3h3v-3" /></svg>
        <svg width="20" height="18" viewBox="0 0 20 18" fill="none" stroke="#fcfcfc" strokeWidth="1.200"><path d="M0.500 5.500c5.500-5 13.500-5 19 0" opacity="0.450" /><path d="M3 8.500c4-4 10-4 14 0M5.500 11.500c2.500-2.500 6.500-2.500 9 0" /><circle cx="10" cy="14.500" r="1.800" /></svg>
      </div>
      <svg width="26" height="70" viewBox="0 0 26 70"><path d="M5 38.500l8-8 8 8" fill="none" stroke="#9a9da0" strokeWidth="1.400" /></svg>
      <div className="flex w-[124px] flex-col items-center pt-[3px] pl-px whitespace-nowrap">
        <span className="text-[29.700px] leading-[40px]">9:23 AM</span>
        <span className="-mt-1.5 text-[22px] leading-[26px]">5/12/24</span>
      </div>
      <div className="mt-[23px] mr-5 ml-[8px] flex h-6 w-6 items-end justify-center border border-[#fcfcfc] pb-[2px]"><div className="h-px w-[18px] bg-[#fcfcfc]" /></div>
    </footer>
  );
}

export default function App() {
  return (
    <div className="h-[1080px] w-[1920px] overflow-hidden bg-white">
      <TitleBar />
      <TabBar />
      <NavBar />
      <AppHeader />
      <Workspace />
      <Taskbar />
    </div>
  );
}
